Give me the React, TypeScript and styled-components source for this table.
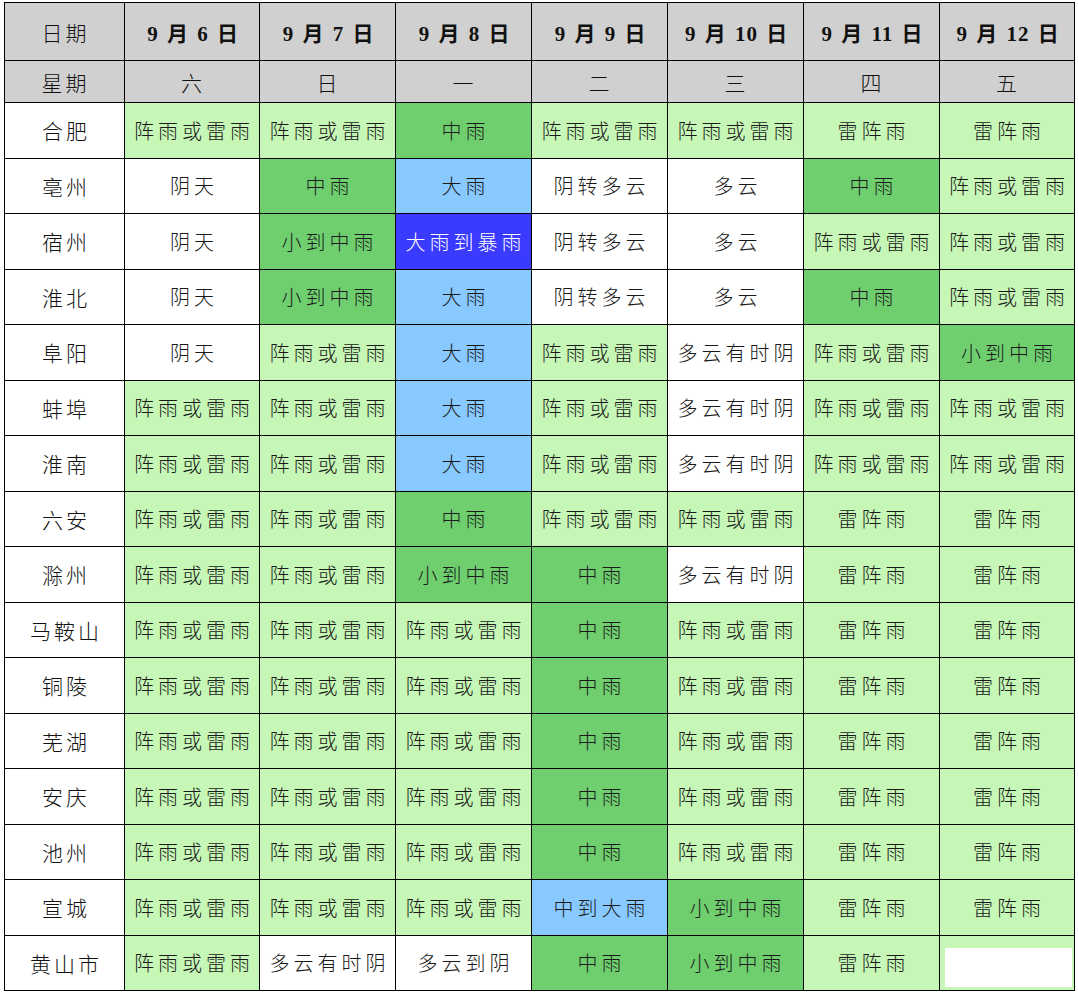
import styled, { createGlobalStyle } from "styled-components";

const GlobalStyle = createGlobalStyle`
  html, body {
    margin: 0;
    background: #ffffff;
  }
  body {
    padding: 2px 4px;
    font-family: "Noto Sans CJK SC", "Noto Sans", sans-serif;
  }
`;

type Tone = "white" | "light" | "green" | "blue" | "deep";

const toneColors: Record<Tone, string> = {
  white: "#ffffff",
  light: "#c6f7b6",
  green: "#6fcf6f",
  blue: "#88c9ff",
  deep: "#3b3bff",
};

const Table = styled.table`
  border-collapse: collapse;
  table-layout: fixed;
  width: 1070px;
`;

const HeadRow = styled.tr<{ $h: number }>`
  height: ${(p) => p.$h}px;
`;

const BodyRow = styled.tr`
  height: 55.5px;
`;

const HeadCell = styled.th<{ $bold?: boolean }>`
  background: #d0d0d0;
  border: 1.5px solid #000;
  padding: 0 0 0 2px;
  text-align: center;
  vertical-align: middle;
  font-family: "Liberation Serif", "Noto Sans CJK SC", serif;
  font-size: 21px;
  font-weight: ${(p) => (p.$bold ? 700 : 300)};
  letter-spacing: ${(p) => (p.$bold ? 1 : 3)}px;
  word-spacing: 2px;
  color: #111;
  white-space: nowrap;
`;

const CityCell = styled.td`
  background: #ffffff;
  border: 1.5px solid #000;
  padding: 0 0 0 3px;
  text-align: center;
  vertical-align: middle;
  font-size: 21px;
  font-weight: 300;
  letter-spacing: 3px;
  color: #111;
`;

const WeatherCell = styled.td<{ $tone: Tone }>`
  background: ${(p) => toneColors[p.$tone]};
  color: ${(p) => (p.$tone === "deep" ? "#ffffff" : "#1a1a1a")};
  border: 1.5px solid #000;
  padding: 0 0 0 4px;
  text-align: center;
  vertical-align: middle;
  font-size: 20px;
  font-weight: 300;
  letter-spacing: 4px;
  white-space: nowrap;
  overflow: hidden;
`;

const EmptyCell = styled.td`
  background: ${toneColors.light};
  border: 1.5px solid #000;
  padding: 0;
  vertical-align: top;
`;

const Blank = styled.div`
  height: 39px;
  margin: 12px 2px 0 5px;
  background: #ffffff;
`;

const dates = ["6", "7", "8", "9", "10", "11", "12"];
const weekdays = ["六", "日", "一", "二", "三", "四", "五"];

const L = "light" as const;
const G = "green" as const;
const B = "blue" as const;
const W = "white" as const;
const D = "deep" as const;

type Cell = [string, Tone];

const zhen: Cell = ["阵雨或雷雨", L];
const lei: Cell = ["雷阵雨", L];
const zhong: Cell = ["中雨", G];
const xiao: Cell = ["小到中雨", G];
const da: Cell = ["大雨", B];
const yin: Cell = ["阴天", W];
const zhuan: Cell = ["阴转多云", W];
const duo: Cell = ["多云", W];
const youshi: Cell = ["多云有时阴", W];

const rows: { city: string; cells: (Cell | null)[] }[] = [
  { city: "合肥", cells: [zhen, zhen, zhong, zhen, zhen, lei, lei] },
  { city: "亳州", cells: [yin, zhong, da, zhuan, duo, zhong, zhen] },
  { city: "宿州", cells: [yin, xiao, ["大雨到暴雨", D], zhuan, duo, zhen, zhen] },
  { city: "淮北", cells: [yin, xiao, da, zhuan, duo, zhong, zhen] },
  { city: "阜阳", cells: [yin, zhen, da, zhen, youshi, zhen, xiao] },
  { city: "蚌埠", cells: [zhen, zhen, da, zhen, youshi, zhen, zhen] },
  { city: "淮南", cells: [zhen, zhen, da, zhen, youshi, zhen, zhen] },
  { city: "六安", cells: [zhen, zhen, zhong, zhen, zhen, lei, lei] },
  { city: "滁州", cells: [zhen, zhen, xiao, zhong, youshi, lei, lei] },
  { city: "马鞍山", cells: [zhen, zhen, zhen, zhong, zhen, lei, lei] },
  { city: "铜陵", cells: [zhen, zhen, zhen, zhong, zhen, lei, lei] },
  { city: "芜湖", cells: [zhen, zhen, zhen, zhong, zhen, lei, lei] },
  { city: "安庆", cells: [zhen, zhen, zhen, zhong, zhen, lei, lei] },
  { city: "池州", cells: [zhen, zhen, zhen, zhong, zhen, lei, lei] },
  { city: "宣城", cells: [zhen, zhen, zhen, ["中到大雨", B], xiao, lei, lei] },
  {
    city: "黄山市",
    cells: [zhen, ["多云有时阴", W], ["多云到阴", W], zhong, xiao, lei, null],
  },
];

const colWidths = [120, 135, 136, 136, 136, 136, 136, 135];

export default function App() {
  return (
    <>
      <GlobalStyle />
      <Table>
        <colgroup>
          {colWidths.map((w, i) => (
            <col key={i} style={{ width: w }} />
          ))}
        </colgroup>
        <thead>
          <HeadRow $h={58}>
            <HeadCell>日期</HeadCell>
            {dates.map((d) => (
              <HeadCell key={d} $bold>
                9 月 {d} 日
              </HeadCell>
            ))}
          </HeadRow>
          <HeadRow $h={42}>
            <HeadCell>星期</HeadCell>
            {weekdays.map((w) => (
              <HeadCell key={w}>{w}</HeadCell>
            ))}
          </HeadRow>
        </thead>
        <tbody>
          {rows.map((row) => (
            <BodyRow key={row.city}>
              <CityCell>{row.city}</CityCell>
              {row.cells.map((c, i) =>
                c ? (
                  <WeatherCell key={i} $tone={c[1]}>
                    {c[0]}
                  </WeatherCell>
                ) : (
                  <EmptyCell key={i}>
                    <Blank />
                  </EmptyCell>
                )
              )}
            </BodyRow>
          ))}
        </tbody>
      </Table>
    </>
  );
}
